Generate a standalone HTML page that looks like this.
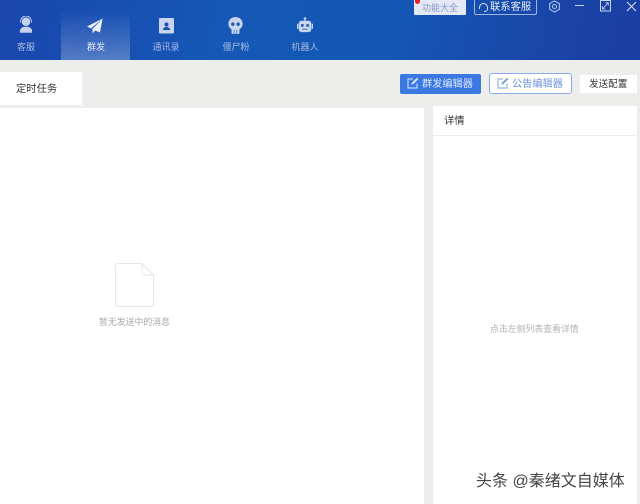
<!DOCTYPE html>
<html><head><meta charset="utf-8">
<style>
html,body{margin:0;padding:0}
body{width:640px;height:504px;position:relative;overflow:hidden;background:#edeeec;font-family:"Liberation Sans","Noto Sans CJK SC",sans-serif;font-size:10px;color:#333}
div,span,svg{position:absolute;box-sizing:border-box}
.t{white-space:nowrap;line-height:14px;filter:blur(.3px)}
.hdr{left:0;top:0;width:640px;height:60px;background:linear-gradient(105deg,#1a46ad 0%,#1558b6 35%,#1458b6 60%,#1a45a8 85%,#1b3ea4 100%)}
.nav{color:#a9bbe2;font-size:9px;text-align:center;width:70px;top:40px}
</style></head><body>
<div class="hdr"></div>
<div style="left:61px;top:10px;width:69px;height:50px;background:linear-gradient(180deg,rgba(255,255,255,0) 0%,rgba(255,255,255,.26) 100%)"></div>

<svg style="left:17px;top:16px" width="18" height="18" viewBox="0 0 22 22"><circle cx="11" cy="7" r="5.200" fill="#c6d2ec"/><path d="M4.500 8V6.500a6.500 6.500 0 0 1 13 0V8" fill="none" stroke="#dbe3f4" stroke-width="1"/><path d="M3.500 19c0-4 3-6 7.500-6s7.500 2 7.500 6v1.500H3.500z" fill="#c6d2ec"/></svg>
<div class="t nav" style="left:-9px">客服</div>

<svg style="left:87px;top:18px" width="17" height="16" viewBox="0 0 19 18"><path d="M17.500.5 0 9.500l4.500 2.300zM17.500.5 6 12.500l.2 4.800 3-3.300 5.300 2.300z" fill="#e9eef8"/></svg>
<div class="t nav" style="left:61px;color:#e4eaf7">群发</div>

<svg style="left:159px;top:18px" width="15" height="16" viewBox="0 0 15 16"><rect width="15" height="15.500" rx="1" fill="#c9d5ef"/><circle cx="7.500" cy="6.500" r="2" fill="#1b4fae"/><path d="M3.800 12c.3-2.200 2-3 3.700-3s3.400.8 3.700 3z" fill="#1b4fae"/></svg>
<div class="t nav" style="left:131px">通讯录</div>

<svg style="left:228px;top:17px" width="15" height="17" viewBox="0 0 17 19"><path d="M8.500 0C3.500 0 .5 3.300.5 7.500c0 3 1.300 5 3.500 6.200V18a1 1 0 0 0 1 1h7a1 1 0 0 0 1-1v-4.300c2.200-1.200 3.500-3.200 3.500-6.200C16.500 3.300 13.500 0 8.500 0z" fill="#c9d5ef"/><circle cx="5.500" cy="8" r="2" fill="#2a5cb6"/><circle cx="11.500" cy="8" r="2" fill="#2a5cb6"/><path d="M7 14.500v4M10 14.500v4" stroke="#2a5cb6" stroke-width=".7"/></svg>
<div class="t nav" style="left:201px">僵尸粉</div>

<svg style="left:297px;top:17px" width="16" height="16" viewBox="0 0 18 19" preserveAspectRatio="none"><circle cx="9" cy="1.800" r="1.500" fill="#c9d5ef"/><rect x="8.400" y="2" width="1.200" height="3" fill="#c9d5ef"/><rect x="2" y="4.500" width="14" height="13.500" rx="3" fill="#c9d5ef"/><rect x="0" y="8" width="1.500" height="6" fill="#c9d5ef"/><rect x="16.500" y="8" width="1.500" height="6" fill="#c9d5ef"/><circle cx="6" cy="10" r="1.700" fill="#2a5cb6"/><circle cx="12" cy="10" r="1.700" fill="#2a5cb6"/><rect x="6" y="14" width="6" height="1" fill="#2a5cb6"/></svg>
<div class="t nav" style="left:270px">机器人</div>

<!-- top right -->
<div style="left:414px;top:0;width:52px;height:15px;background:#e4e9f5;border-radius:0 0 1px 1px"></div>
<div class="t" style="left:422px;top:1px;font-size:9px;color:#7f97c9">功能大全</div>
<div style="left:415px;top:0;width:5px;height:4px;background:#e8202c;border-radius:0 0 3px 3px"></div>
<div style="left:474px;top:0;width:63px;height:15px;border:1px solid #9db7e3;border-top:0;border-radius:0 0 2px 2px"></div>
<svg style="left:478px;top:2px" width="11" height="11" viewBox="0 0 11 11"><path d="M1.500 7V5.500a4 4 0 0 1 8 0V7M9.500 7c0 1.500-1.500 2.500-3.500 2.500" fill="none" stroke="#cfdcf3" stroke-width="1"/></svg>
<div class="t" style="left:490px;top:1px;font-size:10.300px;color:#e5ecf8">联系客服</div>
<svg style="left:548px;top:0" width="13" height="13" viewBox="0 0 14 14"><path d="M7 1l5.200 3v6L7 13l-5.200-3V4z" fill="none" stroke="#b9cbea" stroke-width="1.100"/><circle cx="7" cy="7" r="2.200" fill="none" stroke="#b9cbea" stroke-width="1.100"/></svg>
<div style="left:575px;top:5px;width:9px;height:1px;background:#c9d6ee"></div>
<svg style="left:600px;top:0" width="12" height="12" viewBox="0 0 12 12"><rect x=".5" y=".5" width="10" height="10.500" fill="none" stroke="#c9d6ee"/><path d="M3 8.500l5-5.500M5.500 2.800H8.300v2.700M2.500 6v3h3" fill="none" stroke="#c9d6ee" stroke-width=".8"/></svg>
<svg style="left:626px;top:1px" width="11" height="11" viewBox="0 0 11 11"><path d="M1 1l9 9M10 1l-9 9" stroke="#d3def2" stroke-width="1.100"/></svg>

<!-- tab -->
<div style="left:0;top:72px;width:82px;height:33px;background:#fff"></div>
<div class="t" style="left:16px;top:83px;font-size:10.300px;color:#333">定时任务</div>

<!-- buttons -->
<div style="left:400px;top:74px;width:81px;height:20px;background:#3b78e4;border-radius:2px"></div>
<svg style="left:407px;top:77px" width="12" height="12" viewBox="0 0 12 12"><path d="M10 6.500V11H1V2h5" fill="none" stroke="#dce7fa" stroke-width="1"/><path d="M4.500 7.500l.3-1.800L10 .8l1.300 1.300L6.200 7.200z" fill="#dce7fa"/></svg>
<div class="t" style="left:422px;top:78px;font-size:10.200px;color:#dfe9fb">群发编辑器</div>
<div style="left:489px;top:73px;width:83px;height:21px;background:#fff;border:1px solid #8aaae6;border-radius:3px"></div>
<svg style="left:497px;top:77px" width="12" height="12" viewBox="0 0 12 12"><path d="M10 6.500V11H1V2h5" fill="none" stroke="#7f9fdf" stroke-width="1"/><path d="M4.500 7.500l.3-1.800L10 .8l1.300 1.300L6.200 7.200z" fill="#7f9fdf"/></svg>
<div class="t" style="left:512px;top:78px;font-size:10.200px;color:#6d92de">公告编辑器</div>
<div style="left:580px;top:75px;width:57px;height:18px;background:#fff"></div>
<div class="t" style="left:589px;top:78px;font-size:9.600px;color:#333">发送配置</div>

<!-- panels -->
<div style="left:0;top:108px;width:424px;height:396px;background:#fff"></div>
<div style="left:433px;top:106px;width:204px;height:398px;background:#fff"></div>
<div style="left:433px;top:135px;width:204px;height:1px;background:#eeeeee"></div>
<div class="t" style="left:444px;top:115px;font-size:10.300px;color:#333">详情</div>

<svg style="left:115px;top:263px" width="39" height="44" viewBox="0 0 39 44"><path d="M3.500.5H27L38.500 12v28a3.500 3.500 0 0 1-3.500 3.500H3.500A3 3 0 0 1 .5 40V3.500a3 3 0 0 1 3-3z" fill="#fff" stroke="#e6e6e6"/><path d="M27 .5V9a3 3 0 0 0 3 3h8.500" fill="none" stroke="#e6e6e6"/></svg>
<div class="t" style="left:99px;top:315px;font-size:8.900px;color:#a8a8a8">暂无发送中的消息</div>
<div class="t" style="left:490px;top:322px;font-size:8.900px;color:#b0b0b0">点击左侧列表查看详情</div>

<div class="t" style="left:476px;top:473px;font-size:16px;line-height:18px;color:#444">头条 @秦绪文自媒体</div>
</body></html>
